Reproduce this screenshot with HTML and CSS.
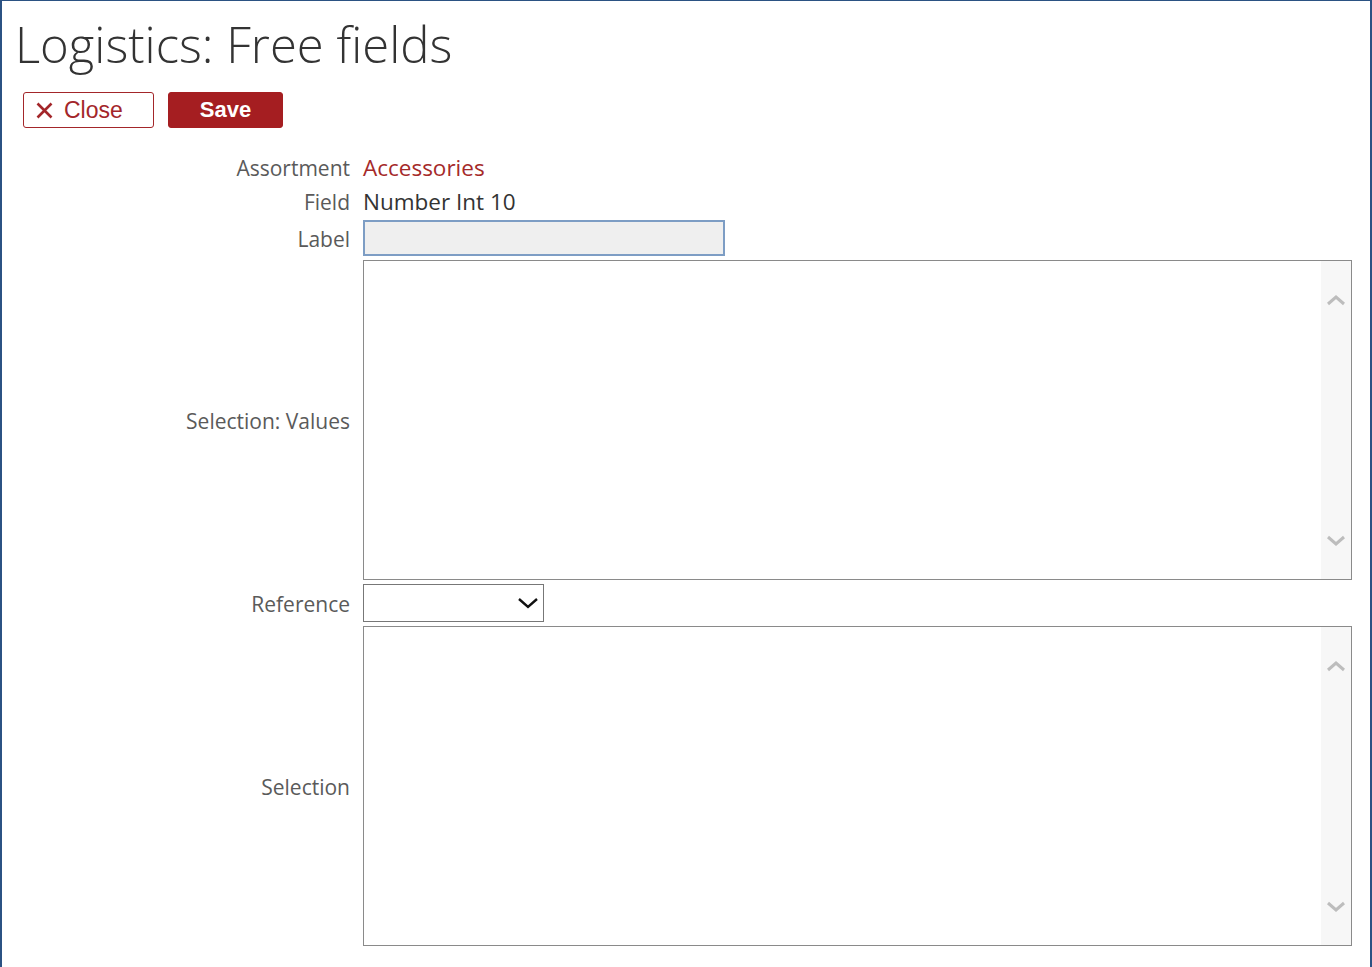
FILE: index.html
```html
<!DOCTYPE html>
<html>
<head>
<meta charset="utf-8">
<link rel="stylesheet" href="styles.css">
</head>
<body>
<div class="page">
  <h1 class="title">Logistics: Free fields</h1>
  <div class="toolbar">
    <button class="btn btn-close"><svg class="x" width="17" height="17" viewBox="0 0 17 17"><path d="M1.5 1.5 L15.5 15.5 M15.5 1.5 L1.5 15.5" stroke="#a3262a" stroke-width="2.6" fill="none"/></svg><span>Close</span></button>
    <button class="btn btn-save">Save</button>
  </div>
  <div class="form">
    <div class="lbl">Assortment</div>
    <div class="val link">Accessories</div>

    <div class="lbl">Field</div>
    <div class="val">Number Int 10</div>

    <div class="lbl">Label</div>
    <div class="val"><input class="text-input" type="text"></div>

    <div class="lbl">Selection: Values</div>
    <div class="val">
      <div class="area">
        <textarea class="area-text"></textarea>
        <div class="scroll">
          <svg class="chev" width="20" height="12" viewBox="0 0 20 12"><path d="M2 10 L10 3 L18 10" fill="none" stroke="#bdbdbd" stroke-width="3"/></svg>
          <svg class="chev" width="20" height="12" viewBox="0 0 20 12"><path d="M2 2 L10 9 L18 2" fill="none" stroke="#bdbdbd" stroke-width="3"/></svg>
        </div>
      </div>
    </div>

    <div class="lbl">Reference</div>
    <div class="val">
      <div class="select">
        <svg width="22" height="14" viewBox="0 0 22 14"><path d="M2 3 L11 11 L20 3" fill="none" stroke="#111" stroke-width="2.4"/></svg>
      </div>
    </div>

    <div class="lbl">Selection</div>
    <div class="val">
      <div class="area">
        <textarea class="area-text"></textarea>
        <div class="scroll">
          <svg class="chev" width="20" height="12" viewBox="0 0 20 12"><path d="M2 10 L10 3 L18 10" fill="none" stroke="#bdbdbd" stroke-width="3"/></svg>
          <svg class="chev" width="20" height="12" viewBox="0 0 20 12"><path d="M2 2 L10 9 L18 2" fill="none" stroke="#bdbdbd" stroke-width="3"/></svg>
        </div>
      </div>
    </div>
  </div>
</div>
</body>
</html>
```
FILE: styles.css
```css
html, body {
  margin: 0;
  padding: 0;
  background: #fff;
}
.page {
  box-sizing: border-box;
  width: 1372px;
  height: 967px;
  border-left: 2px solid #2b5283;
  border-right: 2px solid #2b5283;
  border-top: 1px solid #2b5283;
  padding: 0 18px 0 0;
  font-family: "Open Sans", sans-serif;
}
.title {
  margin: 12px 0 0 13px;
  font-weight: 300;
  font-size: 49px;
  line-height: 62px;
  color: #333;
  letter-spacing: 0;
}
.toolbar {
  display: flex;
  gap: 14px;
  margin: 17px 0 0 21px;
}
.btn {
  box-sizing: border-box;
  height: 36px;
  border-radius: 3px;
  font-family: "Liberation Sans", Arial, sans-serif;
  font-size: 23px;
  padding: 0;
  cursor: pointer;
}
.btn-close {
  width: 131px;
  background: #fff;
  border: 1px solid #a3262a;
  color: #a3262a;
  display: flex;
  align-items: center;
  padding-left: 12px;
}
.btn-close .x {
  margin-right: 11px;
}
.btn-save {
  width: 115px;
  background: #a51e21;
  border: 1px solid #a51e21;
  color: #fff;
  font-weight: bold;
  font-size: 22px;
}
.form {
  display: grid;
  grid-template-columns: 348px 1fr;
  column-gap: 13px;
  row-gap: 4px;
  margin-top: 24px;
}
.lbl {
  box-sizing: border-box;
  display: flex;
  align-items: center;
  justify-content: flex-end;
  font-size: 21px;
  line-height: 28px;
  color: #5a5a5a;
  min-height: 30px;
  padding-top: 2px;
}
.val {
  box-sizing: border-box;
  display: flex;
  align-items: center;
  font-size: 22.5px;
  line-height: 28px;
  color: #333;
  min-height: 30px;
}
.link {
  color: #a52a2a;
}
.val.link, .form > .val:nth-child(4) {
  padding-top: 2px;
}
.text-input {
  box-sizing: border-box;
  width: 362px;
  height: 36px;
  border: 2px solid #7d9dc4;
  background: #efefef;
  margin: 0;
}
.area {
  box-sizing: border-box;
  width: 100%;
  height: 320px;
  border: 1px solid #8a8a8a;
  display: flex;
  background: #fff;
}
.area-text {
  flex: 1;
  border: none;
  resize: none;
  outline: none;
  margin: 0;
  background: transparent;
}
.scroll {
  width: 30px;
  background: #f7f7f7;
  display: flex;
  flex-direction: column;
  justify-content: space-between;
  align-items: center;
  padding: 33px 0 32px;
}
.select {
  box-sizing: border-box;
  width: 181px;
  height: 38px;
  border: 1px solid #777;
  display: flex;
  align-items: center;
  justify-content: flex-end;
  padding-right: 4px;
  background: #fff;
}
```
